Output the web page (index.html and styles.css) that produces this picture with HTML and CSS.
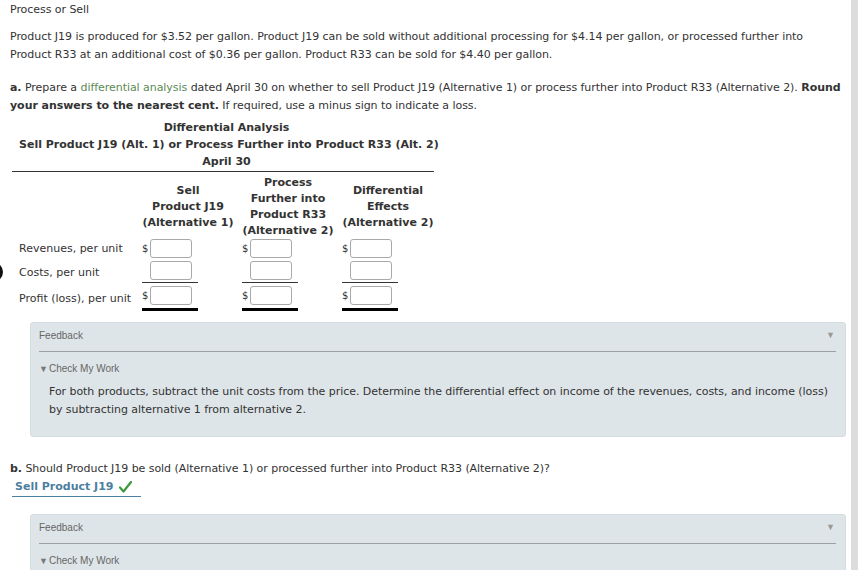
FILE: index.html
```html
<!DOCTYPE html>
<html>
<head>
<meta charset="utf-8">
<link rel="stylesheet" href="styles.css">
</head>
<body>
<div class="page">
  <div class="main">
    <div class="edge-dot"></div>
    <p class="heading">Process or Sell</p>
    <p class="intro">Product J19 is produced for $3.52 per gallon. Product J19 can be sold without additional processing for $4.14 per gallon, or processed further into Product R33 at an additional cost of $0.36 per gallon. Product R33 can be sold for $4.40 per gallon.</p>
    <p class="task"><b class="lead">a.</b> Prepare a <span class="term">differential analysis</span> dated April 30 on whether to sell Product J19 (Alternative 1) or process further into Product R33 (Alternative 2). <b>Round your answers to the nearest cent.</b> If required, use a minus sign to indicate a loss.</p>

    <div class="analysis">
      <div class="title">
        <div>Differential Analysis</div>
        <div>Sell Product J19 (Alt. 1) or Process Further into Product R33 (Alt. 2)</div>
        <div>April 30</div>
      </div>
      <div class="grid">
        <div class="hd lbl"></div>
        <div class="hd c1">Sell<br>Product J19<br>(Alternative 1)</div>
        <div class="hd c2">Process<br>Further into<br>Product R33<br>(Alternative 2)</div>
        <div class="hd c3">Differential<br>Effects<br>(Alternative 2)</div>

        <div class="lbl r1">Revenues, per unit</div>
        <div class="amt r1"><span class="cur">$</span><span class="box"></span></div>
        <div class="amt r1"><span class="cur">$</span><span class="box"></span></div>
        <div class="amt r1"><span class="cur">$</span><span class="box"></span></div>

        <div class="lbl r2">Costs, per unit</div>
        <div class="amt r2"><span class="cur"></span><span class="box"></span></div>
        <div class="amt r2"><span class="cur"></span><span class="box"></span></div>
        <div class="amt r2"><span class="cur"></span><span class="box"></span></div>

        <div class="lbl r3">Profit (loss), per unit</div>
        <div class="amt r3"><span class="cur">$</span><span class="box"></span></div>
        <div class="amt r3"><span class="cur">$</span><span class="box"></span></div>
        <div class="amt r3"><span class="cur">$</span><span class="box"></span></div>
      </div>
    </div>

    <div class="feedback first">
      <div class="fb-head"><span>Feedback</span><span class="fb-toggle">&#9660;</span></div>
      <div class="check"><span class="tri">&#9660;</span>Check My Work</div>
      <p class="fb-text">For both products, subtract the unit costs from the price. Determine the differential effect on income of the revenues, costs, and income (loss) by subtracting alternative 1 from alternative 2.</p>
    </div>

    <p class="task-b"><b>b.</b> Should Product J19 be sold (Alternative 1) or processed further into Product R33 (Alternative 2)?</p>
    <div class="answer">Sell Product J19 <svg class="tick" width="13" height="12" viewBox="0 0 13 12"><path d="M1 6.5 L4.5 10.5 L12 1" fill="none" stroke="#3d9a3d" stroke-width="2.2" stroke-linecap="round" stroke-linejoin="round"/></svg></div>

    <div class="feedback second">
      <div class="fb-head"><span>Feedback</span><span class="fb-toggle">&#9660;</span></div>
      <div class="check"><span class="tri">&#9660;</span>Check My Work</div>
    </div>
  </div>
  <div class="scrollbar"></div>
</div>
</body>
</html>
```
FILE: styles.css
```css
html, body {
  margin: 0;
  padding: 0;
  background: #fff;
}
body {
  font-family: "DejaVu Sans", Verdana, sans-serif;
  font-size: 11px;
  color: #333;
  overflow: hidden;
}
.page {
  display: flex;
  height: 570px;
}
.main {
  flex: 1;
  position: relative;
  padding: 0 5px 0 10px;
  overflow: hidden;
}
.scrollbar {
  width: 7px;
  background: #dcdcdc;
}
.edge-dot {
  position: absolute;
  left: -17px;
  top: 262px;
  width: 20px;
  height: 20px;
  border-radius: 50%;
  background: #111;
}
p {
  margin: 0;
  line-height: 18px;
  letter-spacing: -0.05px;
}
.heading {
  margin-top: 1px;
}
.intro {
  margin-top: 9px;
}
.task {
  margin-top: 15px;
}
.term {
  color: #5c8a55;
}
.analysis {
  margin-left: 2px;
  width: 422px;
  margin-top: 4px;
}
.title {
  text-align: center;
  font-weight: bold;
  line-height: 17px;
  white-space: nowrap;
  border-bottom: 1px solid #333;
  padding: 0 0 1px 7px;
}
.grid {
  display: grid;
  grid-template-columns: 130px 100px 100px 92px;
  grid-template-rows: 64px auto auto auto;
  margin-top: 2px;
}
.hd {
  font-weight: bold;
  text-align: center;
  line-height: 16px;
  align-self: center;
  padding-top: 2px;
}
.hd.c1, .hd.c2 {
  padding-right: 8px;
}
.lbl {
  padding-left: 7px;
  align-self: center;
  white-space: nowrap;
}
.lbl.r2 {
  padding-top: 3px;
}
.lbl.r3 {
  padding-top: 3px;
}
.amt {
  width: 56px;
  display: flex;
  align-items: center;
}
.cur {
  width: 8px;
  font-size: 10px;
  text-align: left;
}
.box {
  width: 42px;
  height: 19px;
  box-sizing: border-box;
  border: 1px solid #a9a9a9;
  border-radius: 3px;
  background: #fff;
}
.amt.r1 {
  padding: 1px 0;
}
.amt.r2 {
  padding: 2px 0 2px;
}
.amt.r3 {
  border-top: 1px solid #333;
  padding: 3px 0 3px;
  border-bottom: 3px solid #000;
}
.feedback {
  background: #dee5e8;
  border: 1px solid #d6dde1;
  border-radius: 3px;
  margin-left: 20px;
  margin-right: 0;
  padding: 0 9px 17px 8px;
}
.feedback.first {
  margin-top: 11px;
}
.fb-head {
  display: flex;
  justify-content: space-between;
  font-family: "Liberation Sans", Arial, sans-serif;
  font-size: 10px;
  color: #666;
  line-height: 14px;
  padding: 6px 0 8px;
  border-bottom: 1px solid #9aa0a3;
}
.fb-toggle {
  font-size: 9px;
  color: #999;
  margin-top: -1px;
  padding-right: 1px;
}
.check {
  font-family: "Liberation Sans", Arial, sans-serif;
  font-size: 10px;
  color: #666;
  line-height: 14px;
  margin-top: 10px;
}
.tri {
  font-size: 9px;
  color: #777;
  margin-right: 1px;
}
.fb-text {
  margin-top: 7px;
  padding-left: 10px;
}
.task-b {
  margin-top: 23px;
}
.answer {
  display: inline-flex;
  align-items: center;
  font-weight: bold;
  color: #4d7fa0;
  line-height: 18px;
  padding: 0 9px 0 3px;
  margin-left: 2px;
  border-bottom: 1px solid #4d7fa0;
}
.tick {
  margin-left: 5px;
}
.feedback.second {
  margin-top: 17px;
  padding-bottom: 40px;
}
```
